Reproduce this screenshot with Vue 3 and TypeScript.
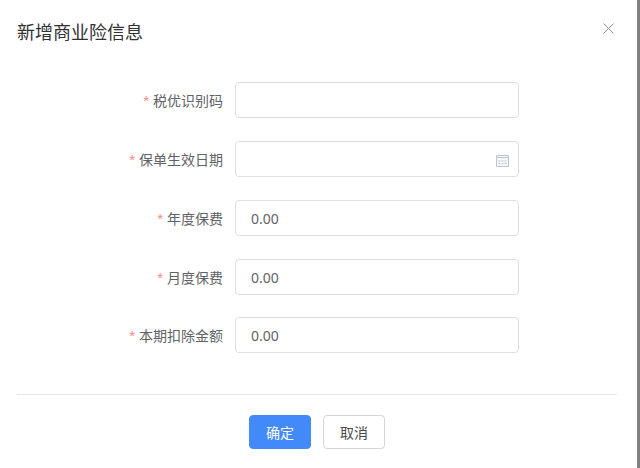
<script setup lang="ts">
interface Field {
  label: string
  value: string
  date?: boolean
}

const fields: Field[] = [
  { label: '税优识别码', value: '' },
  { label: '保单生效日期', value: '', date: true },
  { label: '年度保费', value: '0.00' },
  { label: '月度保费', value: '0.00' },
  { label: '本期扣除金额', value: '0.00' },
]
</script>

<template>
  <div class="dialog">
    <header class="dialog__header">
      <span class="dialog__title">新增商业险信息</span>
      <button class="dialog__close" type="button" aria-label="关闭">
        <svg width="11" height="11" viewBox="0 0 11 11">
          <path d="M.5.5l10 10M10.500.5l-10 10" fill="none" stroke="#909399" stroke-width="1" />
        </svg>
      </button>
    </header>

    <form class="form" @submit.prevent>
      <div v-for="field in fields" :key="field.label" class="form__row">
        <label class="form__label"><i class="form__star">*</i>{{ field.label }}</label>
        <div class="form__control">
          <input class="form__input" type="text" :value="field.value" />
          <svg v-if="field.date" class="form__icon" width="13" height="13" viewBox="0 0 13 13">
            <path d="M.5 1.500h12v11H.5z" fill="#f7f7f9" stroke="#c0c4cc" />
            <path d="M.5 3.500h12" fill="none" stroke="#c0c4cc" />
            <path d="M3 .5v1.500M10 .5v1.500M2.500 7h2M5.500 7h2M8.500 7h2M2.500 9.500h2M5.500 9.500h2M8.500 9.500h2" fill="none" stroke="#c0c4cc" />
          </svg>
        </div>
      </div>
    </form>

    <footer class="dialog__footer">
      <button class="btn btn--primary" type="button">确定</button>
      <button class="btn" type="button">取消</button>
    </footer>
  </div>
</template>

<style>
html,
body {
  margin: 0;
  background: #fff;
}
</style>

<style scoped>
.dialog {
  box-sizing: border-box;
  width: 640px;
  height: 468px;
  padding: 0 20px 0 17px;
  border-right: 3px solid #808080;
  background: #fff;
  font-family: "Noto Sans", "Noto Sans CJK SC", sans-serif;
  overflow: hidden;
}

.dialog__header {
  display: flex;
  align-items: center;
  justify-content: space-between;
  height: 62px;
}

.dialog__title {
  margin-top: -1px;
  font-size: 18px;
  color: #303133;
}

.dialog__close {
  display: flex;
  margin: -6px 3px 0 0;
  padding: 0;
  border: none;
  background: none;
}

.form {
  display: flex;
  flex-direction: column;
  gap: 22.75px;
  margin-top: 20.4px;
}

.form__row {
  display: flex;
  align-items: center;
}

.form__label {
  box-sizing: border-box;
  width: 218px;
  padding-right: 12px;
  font-size: 14px;
  text-align: right;
  color: #606266;
}

.form__star {
  margin-right: 4px;
  font-family: "Liberation Sans", sans-serif;
  font-size: 15px;
  font-style: normal;
  color: #f88a8a;
}

.form__control {
  position: relative;
  width: 284px;
}

.form__input {
  display: block;
  box-sizing: border-box;
  width: 100%;
  height: 36px;
  padding: 1px 15px 0;
  border: 1px solid #dcdfe6;
  border-radius: 4px;
  outline: none;
  font-family: inherit;
  font-size: 14px;
  color: #606266;
}

.form__icon {
  position: absolute;
  top: 13px;
  right: 10px;
}

.dialog__footer {
  display: flex;
  justify-content: center;
  gap: 12px;
  margin: 40.6px 0 0;
  padding-top: 20px;
  border-top: 1px solid #e4e4ea;
}

.btn {
  box-sizing: border-box;
  width: 62px;
  height: 34px;
  padding: 0;
  border: 1px solid #d3d4dc;
  border-radius: 4px;
  background: #fff;
  font-family: inherit;
  font-size: 14px;
  color: #4a4a4a;
}

.btn--primary {
  border-color: #4289f9;
  background: #4289f9;
  color: #fff;
}
</style>
